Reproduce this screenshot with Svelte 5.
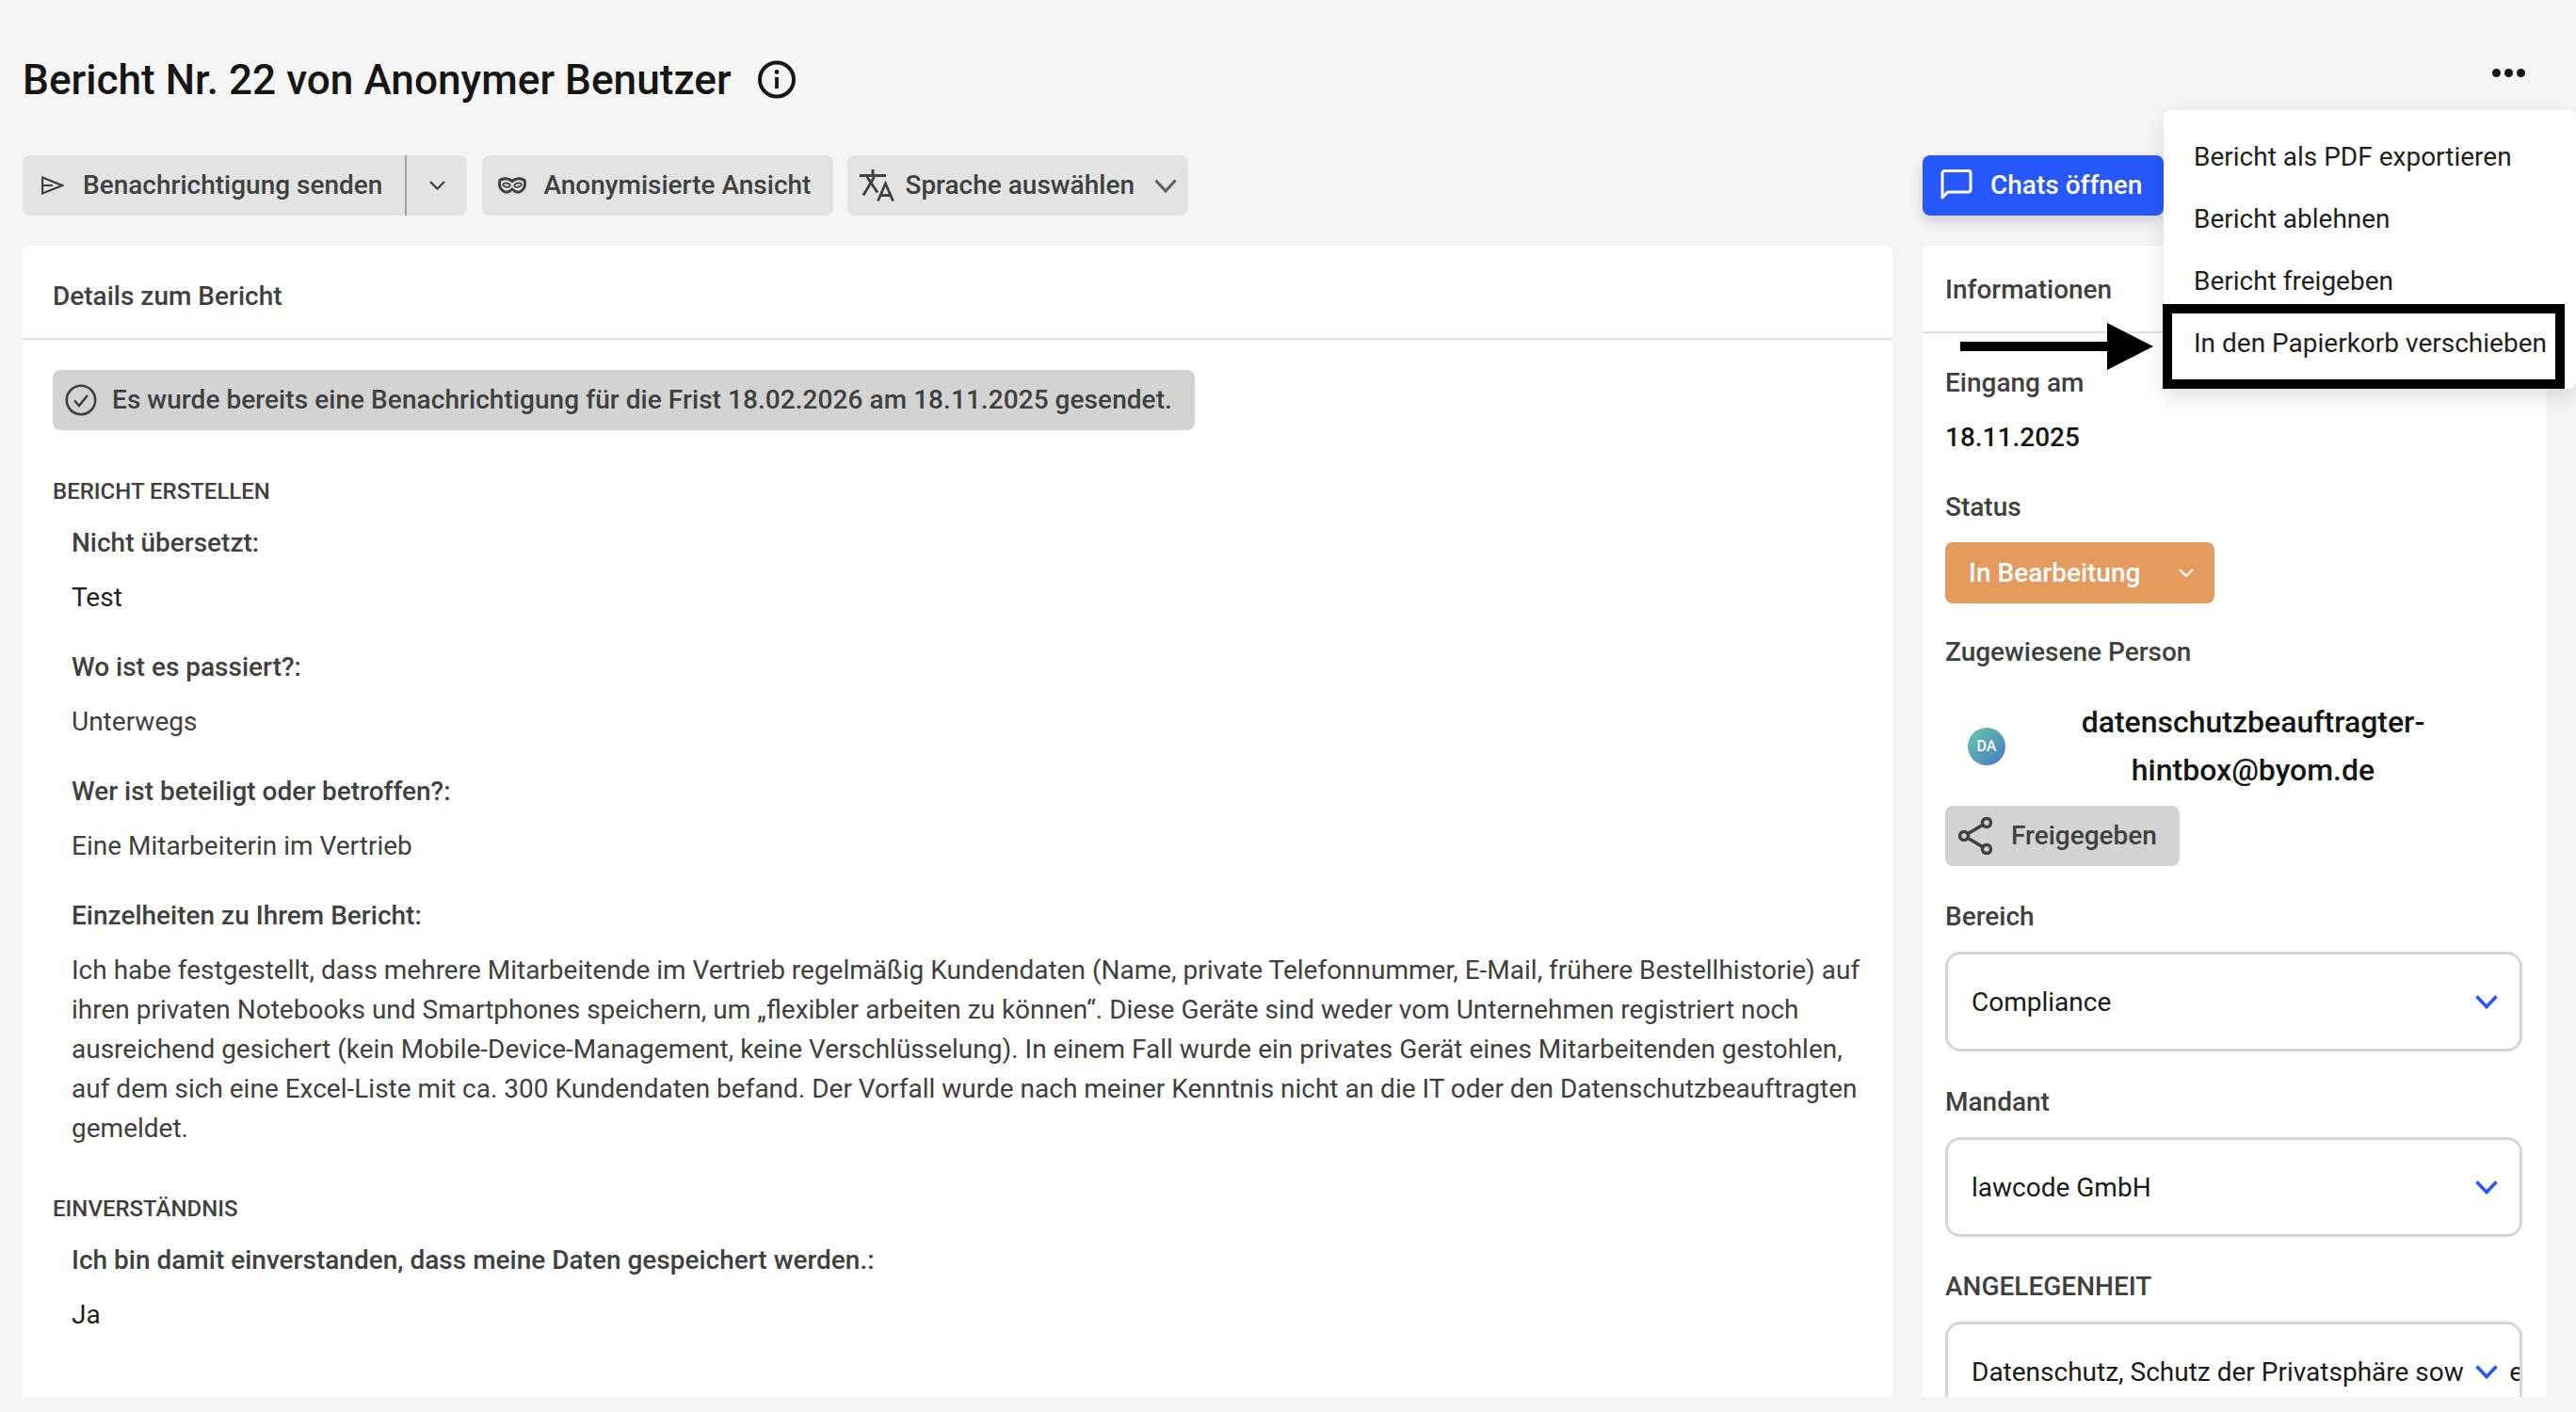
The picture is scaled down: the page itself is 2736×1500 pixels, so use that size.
<script>
  const items = [
    { q: 'Nicht übersetzt:', a: 'Test', dark: true },
    { q: 'Wo ist es passiert?:', a: 'Unterwegs' },
    { q: 'Wer ist beteiligt oder betroffen?:', a: 'Eine Mitarbeiterin im Vertrieb' },
    { q: 'Einzelheiten zu Ihrem Bericht:', a: 'Ich habe festgestellt, dass mehrere Mitarbeitende im Vertrieb regelmäßig Kundendaten (Name, private Telefonnummer, E-Mail, frühere Bestellhistorie) auf ihren privaten Notebooks und Smartphones speichern, um „flexibler arbeiten zu können“. Diese Geräte sind weder vom Unternehmen registriert noch ausreichend gesichert (kein Mobile-Device-Management, keine Verschlüsselung). In einem Fall wurde ein privates Gerät eines Mitarbeitenden gestohlen, auf dem sich eine Excel-Liste mit ca. 300 Kundendaten befand. Der Vorfall wurde nach meiner Kenntnis nicht an die IT oder den Datenschutzbeauftragten gemeldet.' }
  ];
  const menu = ['Bericht als PDF exportieren', 'Bericht ablehnen', 'Bericht freigeben', 'In den Papierkorb verschieben'];
  const selects = [
    { label: 'Bereich', value: 'Compliance' },
    { label: 'Mandant', value: 'lawcode GmbH' },
    { label: 'ANGELEGENHEIT', value: 'Datenschutz, Schutz der Privatsphäre sowie Netz- und Informationssicherheit', last: true }
  ];
</script>

<div class="page">
  <header class="top">
    <h1>Bericht Nr. 22 von Anonymer Benutzer</h1>
    <svg class="info" viewBox="0 0 42 42" fill="none" stroke="#161616" stroke-width="4">
      <circle cx="21" cy="20.500" r="18" />
      <path d="M21 18v12" stroke-width="3.800" />
      <circle cx="21" cy="12.500" r="2.400" fill="#161616" stroke="none" />
    </svg>
    <div class="dots"><i></i><i></i><i></i></div>
  </header>

  <div class="columns toolbar">
    <div class="tools">
      <div class="btn split">
        <span class="send">
          <svg width="24" height="20" viewBox="0 0 24 20" fill="none" stroke="#404040" stroke-width="2.200">
            <path d="M1.100 1.600 22 10 1.100 18.400Z M1.100 10H12" />
          </svg>
          Benachrichtigung senden
        </span>
        <span class="more">
          <svg width="17" height="10" viewBox="0 0 17 10" fill="none" stroke="#404040" stroke-width="2.200"><path d="M1 1l7.500 7.500L16 1" /></svg>
        </span>
      </div>
      <div class="btn anon">
        <svg width="30" height="18" viewBox="0 0 30 18" fill="none" stroke="#404040" stroke-width="3">
          <path d="M2 3.500C5.500 .8 11 1 15 4.500 19 1 24.500 .8 28 3.500 29.300 8.500 27.500 13 24 15.300 21 17 17.500 15.500 15 13 12.500 15.500 9 17 6 15.300 2.500 13 .7 8.500 2 3.500Z" />
          <ellipse cx="9" cy="8.600" rx="3.800" ry="2" transform="rotate(12 9 8.600)" stroke-width="1.800" />
          <ellipse cx="21" cy="8.600" rx="3.800" ry="2" transform="rotate(-12 21 8.600)" stroke-width="1.800" />
        </svg>
        Anonymisierte Ansicht
      </div>
      <div class="btn lang">
        <svg width="37" height="34" viewBox="0 0 37 34" fill="none" stroke="#404040" stroke-width="2.800">
          <path d="M0 6.500H28M14 0V6.500" stroke-width="3" />
          <path d="M8 8 19 24.500M15.500 8 4 27.500" />
          <path d="M19.500 33.500 27.500 15 35.500 33.500M22 27.500H33" />
        </svg>
        <span>Sprache auswählen</span>
        <svg class="lang-chev" width="24" height="15" viewBox="0 0 24 15" fill="none" stroke="#5f5f5f" stroke-width="3"><path d="M1.500 1.500 12 13 22.500 1.500" /></svg>
      </div>
    </div>
    <div class="btn chats">
      <svg width="34" height="34" viewBox="0 0 34 34" fill="none" stroke="#fff" stroke-width="3" stroke-linejoin="round">
        <path d="M2 30V4a2.500 2.500 0 0 1 2.500-2.500H29.500A2.500 2.500 0 0 1 32 4V21.500A2.500 2.500 0 0 1 29.500 24H7.500L2 30Z" />
      </svg>
      Chats öffnen
    </div>
  </div>

  <main class="columns">
    <section class="card">
      <div class="card-head details">Details zum Bericht</div>
      <div class="details-body">
        <div class="notice">
          <svg width="34" height="34" viewBox="0 0 34 34" fill="none" stroke="#404040" stroke-width="2.600">
            <circle cx="17" cy="17" r="15.200" />
            <path d="M10 17.500l5 5.500 9-11" />
          </svg>
          Es wurde bereits eine Benachrichtigung für die Frist 18.02.2026 am 18.11.2025 gesendet.
        </div>

        <h2>BERICHT ERSTELLEN</h2>
        {#each items as item}
          <div class="qa">
            <div class="q">{item.q}</div>
            <div class="a" class:dark={item.dark}>{item.a}</div>
          </div>
        {/each}

        <h2 class="second">EINVERSTÄNDNIS</h2>
        <div class="qa">
          <div class="q">Ich bin damit einverstanden, dass meine Daten gespeichert werden.:</div>
          <div class="a dark">Ja</div>
        </div>
      </div>
    </section>

    <aside class="card">
      <div class="card-head info-head">Informationen</div>
      <div class="info-body">
        <div class="label">Eingang am</div>
        <div class="value">18.11.2025</div>

        <div class="label status-label">Status</div>
        <div class="status">
          <span>In Bearbeitung</span>
          <svg width="16" height="10" viewBox="0 0 16 10" fill="none" stroke="#fff" stroke-width="2.200"><path d="M1 1l7 7 7-7" /></svg>
        </div>

        <div class="label person-label">Zugewiesene Person</div>
        <div class="person">
          <div class="avatar">DA</div>
          <div class="name">datenschutzbeauftragter-hintbox@byom.de</div>
        </div>
        <div class="share">
          <svg width="36" height="40" viewBox="0 0 36 40" fill="none" stroke="#404040" stroke-width="3.500">
            <circle cx="30" cy="6" r="4.500" />
            <circle cx="6" cy="20" r="4.500" />
            <circle cx="30" cy="34" r="4.500" />
            <path d="M26 8.300 10 17.700M10 22.300l16 9.400" />
          </svg>
          Freigegeben
        </div>

        {#each selects as s}
          <div class="label select-label" class:last={s.last}>{s.label}</div>
          <div class="select">
            <span class="select-text">{s.value}</span>
            <span class="select-chev">
              <svg width="24" height="15" viewBox="0 0 24 15" fill="none" stroke="#2557fa" stroke-width="3.600"><path d="M1.500 1.500 12 12.500 22.500 1.500" /></svg>
            </span>
          </div>
        {/each}
      </div>
    </aside>
  </main>

  <div class="menu">
    {#each menu as m}
      <div class="menu-item">{m}</div>
    {/each}
  </div>
  <div class="highlight"></div>
  <svg class="arrow" width="205" height="50" viewBox="0 0 205 50">
    <path d="M0 20H156V0L205 25 156 50V30H0Z" fill="#000" />
  </svg>
</div>

<style>
  :global(body) {
    margin: 0;
    background: #f5f5f5;
  }
  .page {
    position: relative;
    box-sizing: border-box;
    width: 2736px;
    height: 1500px;
    overflow: hidden;
    padding: 55px 32px 0 24px;
    font-family: Roboto, "Noto Sans", sans-serif;
    font-size: 28px;
    line-height: 42px;
    color: #404040;
    background: #f5f5f5;
  }
  .top {
    display: flex;
    align-items: center;
    height: 60px;
  }
  h1 {
    margin: 0;
    font-size: 44.2px;
    line-height: 60px;
    font-weight: 500;
    color: #161616;
  }
  .info {
    width: 42px;
    height: 42px;
    margin-left: 27px;
  }
  .dots {
    display: flex;
    gap: 4px;
    margin-left: auto;
    margin-right: 22px;
    margin-top: -16px;
  }
  .dots i {
    width: 9px;
    height: 9px;
    border-radius: 50%;
    background: #161616;
  }
  .columns {
    display: grid;
    grid-template-columns: 1986px 662px;
    column-gap: 32px;
  }
  .toolbar {
    margin-top: 50px;
    margin-bottom: 32px;
  }
  .tools {
    display: flex;
  }
  .btn {
    display: flex;
    align-items: center;
    height: 64px;
    box-sizing: border-box;
    background: #e3e3e3;
    border-radius: 8px;
    font-weight: 500;
    white-space: nowrap;
  }
  .split {
    overflow: hidden;
  }
  .send {
    display: flex;
    align-items: center;
    gap: 20px;
    height: 100%;
    padding: 0 24px 0 20px;
    border-right: 2px solid #a3a3a3;
  }
  .more {
    display: flex;
    align-items: center;
    justify-content: center;
    width: 64px;
  }
  .anon {
    gap: 18px;
    margin-left: 16px;
    padding: 0 24px 0 17px;
  }
  .lang {
    margin-left: 15px;
    padding: 0 12px 0 13px;
  }
  .lang span {
    margin-left: 11px;
  }
  .lang-chev {
    margin-left: 21px;
  }
  .chats {
    justify-self: start;
    gap: 19px;
    width: 256px;
    padding-left: 19px;
    background: #2557fa;
    color: #fff;
    box-shadow: 0 6px 14px rgba(0, 0, 0, 0.16);
  }
  .card {
    height: 1223px;
    overflow: hidden;
    background: #fff;
    border-radius: 8px 8px 0 0;
  }
  .card-head {
    box-sizing: border-box;
    border-bottom: 2px solid #e0e0e0;
    font-weight: 500;
  }
  .details {
    height: 100px;
    padding: 33px 32px 0;
  }
  .details-body {
    padding: 32px 32px 0;
  }
  .notice {
    display: inline-flex;
    align-items: center;
    gap: 16px;
    height: 64px;
    padding: 0 24px 0 13px;
    background: #d3d3d3;
    border-radius: 8px;
    font-weight: 500;
    letter-spacing: 0.06px;
    vertical-align: top;
  }
  h2 {
    margin: 47px 0 16px;
    font-size: 24px;
    line-height: 36px;
    font-weight: 500;
  }
  h2.second {
    margin-top: 46px;
  }
  .qa {
    padding-left: 20px;
    margin-bottom: 32px;
  }
  .q {
    font-weight: 500;
    margin-bottom: 16px;
  }
  .a.dark {
    color: #1f1f1f;
  }
  .info-head {
    height: 93px;
    padding: 26px 24px 0;
  }
  .info-body {
    padding: 32px 24px 0;
  }
  .label {
    font-weight: 500;
    margin-bottom: 16px;
  }
  .value {
    font-weight: 500;
    color: #161616;
  }
  .status-label {
    margin-top: 32px;
  }
  .status {
    display: flex;
    align-items: center;
    justify-content: space-between;
    box-sizing: border-box;
    width: 286px;
    height: 65px;
    margin-bottom: -1px;
    padding: 0 22px 0 25px;
    background: #e59a5e;
    border-radius: 8px;
    color: #fff;
    font-weight: 500;
  }
  .person-label {
    margin-top: 32px;
    margin-bottom: 28px;
  }
  .person {
    display: flex;
    align-items: center;
    padding: 0 24px;
  }
  .avatar {
    display: flex;
    align-items: center;
    justify-content: center;
    flex: none;
    width: 40px;
    height: 40px;
    border-radius: 50%;
    background: linear-gradient(135deg, #68c9a0, #4378cf);
    color: #fff;
    font-size: 16px;
    font-weight: 500;
  }
  .name {
    flex: 1;
    text-align: center;
    font-size: 32px;
    line-height: 51px;
    font-weight: 500;
    color: #161616;
  }
  .share {
    display: inline-flex;
    align-items: center;
    gap: 20px;
    height: 64px;
    margin-top: 12px;
    padding: 0 24px 0 14px;
    background: #d3d3d3;
    border-radius: 8px;
    font-weight: 500;
    vertical-align: top;
  }
  .select-label {
    margin-top: 32px;
  }
  .select-label:not(.last) {
    margin-top: 33px;
  }
  .select {
    position: relative;
    display: flex;
    align-items: center;
    box-sizing: border-box;
    width: 613px;
    height: 106px;
    padding: 1px 0 0 25px;
    border: 3px solid #d6d6d6;
    border-radius: 16px;
    overflow: hidden;
    color: #1a1a1a;
  }
  .select-text {
    white-space: nowrap;
  }
  .select-chev {
    position: absolute;
    top: 0;
    bottom: 0;
    right: 12px;
    width: 46px;
    display: flex;
    align-items: center;
    justify-content: center;
    background: #fff;
  }
  .menu {
    position: absolute;
    left: 2298px;
    top: 117px;
    width: 438px;
    height: 296px;
    box-sizing: border-box;
    padding-top: 17px;
    background: #fff;
    border-radius: 8px;
    box-shadow: 0 8px 20px rgba(0, 0, 0, 0.12);
    color: #1f1f1f;
  }
  .menu-item {
    height: 66px;
    line-height: 66px;
    padding-left: 32px;
    white-space: nowrap;
  }
  .highlight {
    position: absolute;
    left: 2297px;
    top: 323px;
    width: 427px;
    height: 90px;
    box-sizing: border-box;
    border: 10px solid #000;
  }
  .arrow {
    position: absolute;
    left: 2082px;
    top: 343px;
  }
</style>
